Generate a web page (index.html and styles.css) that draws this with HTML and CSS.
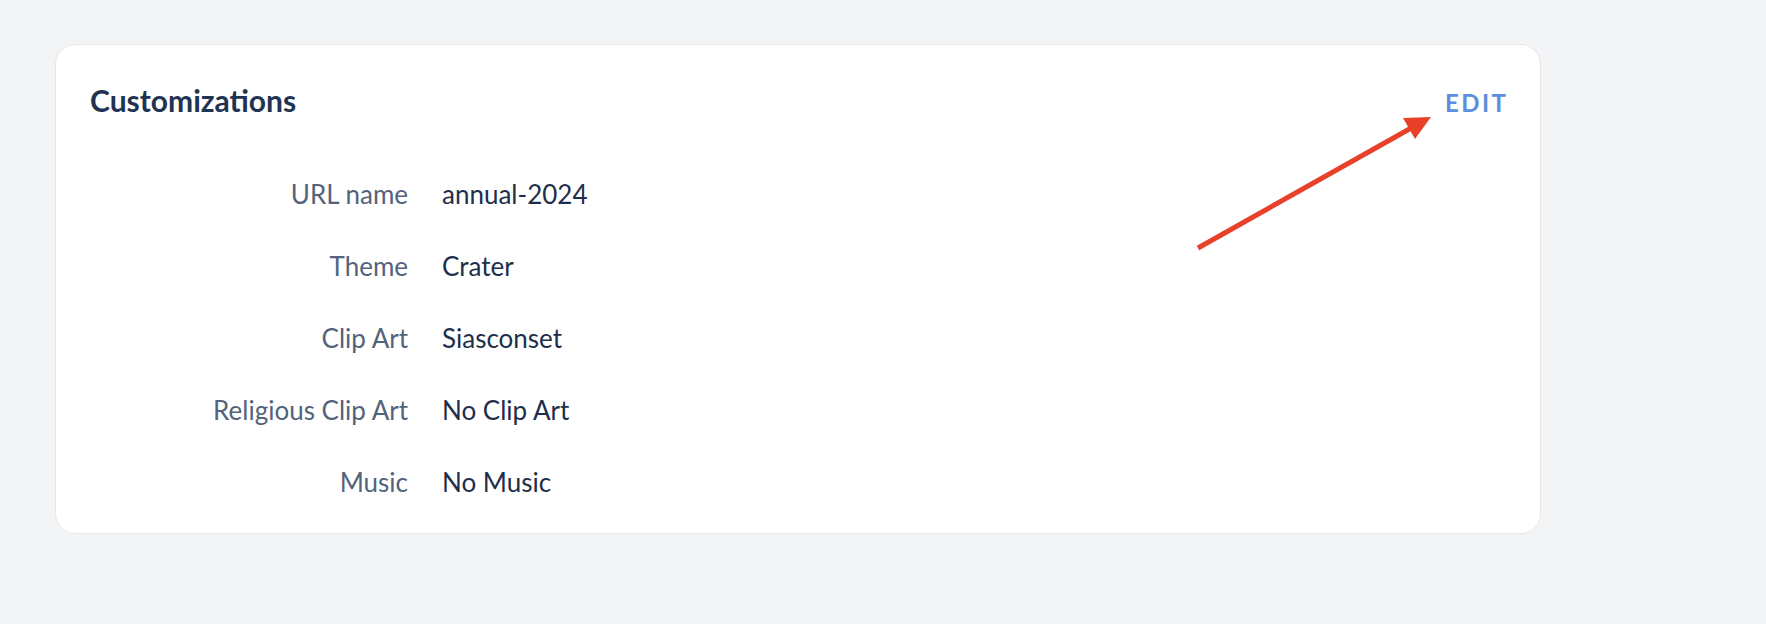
FILE: index.html
```html
<!DOCTYPE html>
<html>
<head>
<meta charset="utf-8">
<link rel="stylesheet" href="styles.css">
</head>
<body>
<div class="page">
  <section class="card">
    <header class="card-head">
      <h2 class="title">Customizations</h2>
      <a class="edit" href="#">EDIT</a>
    </header>
    <dl class="fields">
      <dt>URL name</dt><dd>annual-2024</dd>
      <dt>Theme</dt><dd>Crater</dd>
      <dt>Clip Art</dt><dd>Siasconset</dd>
      <dt>Religious Clip Art</dt><dd>No Clip Art</dd>
      <dt>Music</dt><dd>No Music</dd>
    </dl>
    <svg class="arrow" width="260" height="150" viewBox="0 0 260 150">
      <line x1="10" y1="141" x2="225" y2="20" stroke="#e8412a" stroke-width="5"/>
      <polygon points="243,10 215,11 227,32" fill="#e8412a"/>
    </svg>
  </section>
</div>
</body>
</html>
```
FILE: styles.css
```css
html, body {
  margin: 0;
  padding: 0;
  background: #f3f4f6;
}
body {
  font-family: "Source Sans Pro", Lato, "Liberation Sans", sans-serif;
  width: 1766px;
  height: 624px;
  overflow: hidden;
}
.page {
  padding: 44px 0 0 55px;
}
.card {
  position: relative;
  box-sizing: border-box;
  width: 1486px;
  height: 490px;
  background: #fff;
  border: 1.5px solid #e5e7eb;
  border-radius: 20px;
  padding: 35px 34px 0 34px;
}
.card-head {
  display: flex;
  justify-content: space-between;
  align-items: baseline;
}
.title {
  margin: 0;
  font-size: 30px;
  font-weight: 700;
  color: #1f3352;
  line-height: 40px;
}
.edit {
  font-size: 24px;
  font-weight: 700;
  color: #5b8ede;
  letter-spacing: 2.5px;
  text-decoration: none;
  margin-right: -2.5px;
}
.fields {
  display: grid;
  grid-template-columns: 318px auto;
  column-gap: 34px;
  row-gap: 36px;
  margin: 56px 0 0 0;
  font-size: 26px;
  line-height: 36px;
}
.fields dt {
  text-align: right;
  color: #53637b;
}
.fields dd {
  margin: 0;
  color: #1e2f4b;
}
.arrow {
  position: absolute;
  left: 1132px;
  top: 62px;
}
```
